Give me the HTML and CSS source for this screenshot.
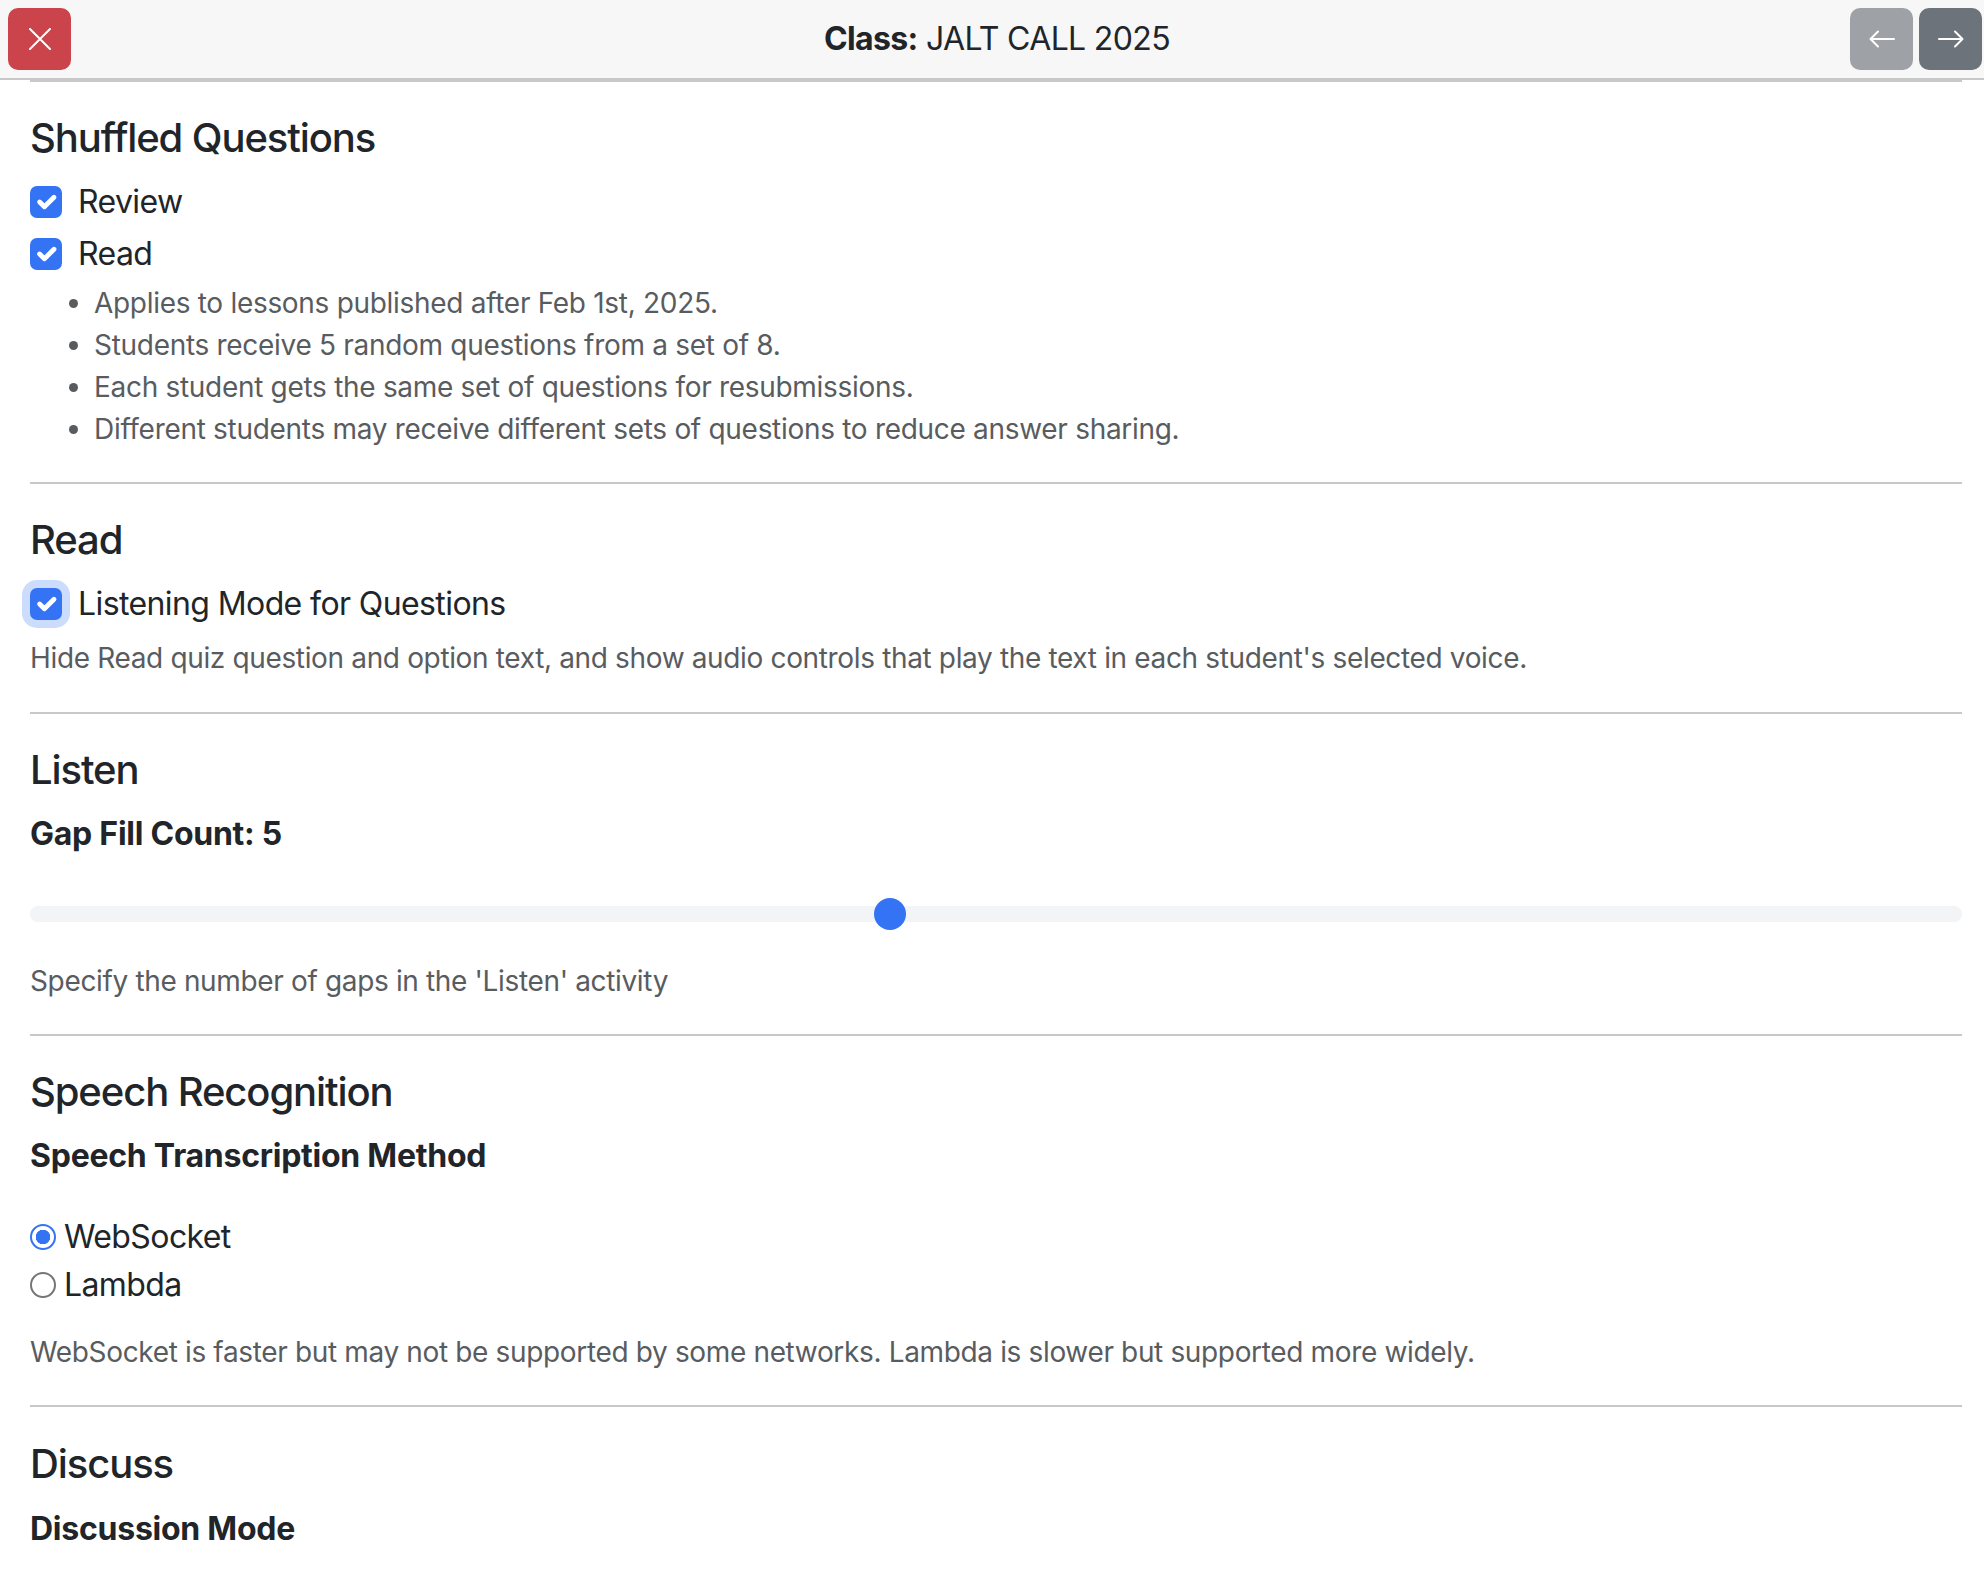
FILE: index.html
```html
<!DOCTYPE html>
<html lang="en">
<head>
<meta charset="utf-8">
<title>Class: JALT CALL 2025</title>
<link rel="stylesheet" href="styles.css">
</head>
<body>
<header class="topbar">
  <div class="topbar-left">
    <button class="btn btn-close-red" aria-label="Close">
      <svg width="22" height="22" viewBox="0 0 22 22"><path d="M1 1 L21 21 M21 1 L1 21" stroke="#fff" stroke-width="2" fill="none" stroke-linecap="round"/></svg>
    </button>
  </div>
  <div class="title"><b>Class:</b> JALT CALL 2025</div>
  <div class="topbar-right">
    <button class="btn btn-back" aria-label="Previous">
      <svg width="26" height="18" viewBox="0 0 26 18"><path d="M25 9 H2 M9 1.5 L1.5 9 L9 16.5" stroke="#fff" stroke-width="2" fill="none" stroke-linecap="round" stroke-linejoin="round"/></svg>
    </button>
    <button class="btn btn-next" aria-label="Next">
      <svg width="26" height="18" viewBox="0 0 26 18"><path d="M1 9 H24 M17 1.5 L24.5 9 L17 16.5" stroke="#fff" stroke-width="2" fill="none" stroke-linecap="round" stroke-linejoin="round"/></svg>
    </button>
  </div>
</header>

<main class="content">
  <section class="section">
    <h5 class="sec-title">Shuffled Questions</h5>
    <label class="form-check"><input type="checkbox" class="check" checked><span>Review</span></label>
    <label class="form-check"><input type="checkbox" class="check" checked><span>Read</span></label>
    <ul class="notes">
      <li>Applies to lessons published after Feb 1st, 2025.</li>
      <li>Students receive 5 random questions from a set of 8.</li>
      <li>Each student gets the same set of questions for resubmissions.</li>
      <li>Different students may receive different sets of questions to reduce answer sharing.</li>
    </ul>
  </section>

  <section class="section">
    <h5 class="sec-title">Read</h5>
    <label class="form-check"><input type="checkbox" class="check focused" checked><span>Listening Mode for Questions</span></label>
    <div class="form-text tight">Hide Read quiz question and option text, and show audio controls that play the text in each student's selected voice.</div>
  </section>

  <section class="section">
    <h5 class="sec-title">Listen</h5>
    <label class="field-label" for="gapfill">Gap Fill Count: 5</label>
    <input id="gapfill" class="range" type="range" min="1" max="10" value="5">
    <div class="form-text loose">Specify the number of gaps in the 'Listen' activity</div>
  </section>

  <section class="section">
    <h5 class="sec-title">Speech Recognition</h5>
    <div class="field-label group-label">Speech Transcription Method</div>
    <label class="radio-row"><input type="radio" name="method" class="radio" checked><span>WebSocket</span></label>
    <label class="radio-row"><input type="radio" name="method" class="radio"><span>Lambda</span></label>
    <div class="form-text loose">WebSocket is faster but may not be supported by some networks. Lambda is slower but supported more widely.</div>
  </section>

  <section class="section last">
    <h5 class="sec-title">Discuss</h5>
    <div class="field-label">Discussion Mode</div>
  </section>
</main>
</body>
</html>
```

FILE: styles.css
```css
html, body {
  margin: 0;
  padding: 0;
  background: #ffffff;
}
body {
  font-family: Inter, "Noto Sans", "Liberation Sans", sans-serif;
  font-size: 32px;
  line-height: 1.5;
  letter-spacing: -0.6px;
  color: #212529;
  overflow: hidden;
}

/* ---------- top bar ---------- */
.topbar {
  display: grid;
  grid-template-columns: 1fr auto 1fr;
  align-items: center;
  height: 78px;
  padding: 0 2px 0 8px;
  background: #f7f7f7;
  border-bottom: 2px solid #c8c8c8;
}
.topbar-left { display: flex; justify-content: flex-start; }
.topbar-right { display: flex; justify-content: flex-end; gap: 6px; }
.title {
  font-size: 32px;
  line-height: 48px;
  letter-spacing: -0.65px;
  color: #212529;
  white-space: nowrap;
  padding-left: 4px;
}
.title b { font-weight: 700; }
.btn {
  width: 63px;
  height: 62px;
  border: 0;
  border-radius: 10px;
  padding: 0;
  display: flex;
  align-items: center;
  justify-content: center;
  cursor: pointer;
}
.btn-close-red { background: #cb444b; }
.btn-back { background: #9ea1a6; }
.btn-next { background: #6c737b; }

/* ---------- content ---------- */
.content {
  margin: 0 22px 0 30px;
  border-top: 2px solid #c8c8c8;
}
.section {
  padding: 32px 0;
  border-bottom: 2px solid #c8c8c8;
}
.section.last {
  border-bottom: 0;
  padding-top: 33px;
}
.sec-title {
  margin: 0 0 16px;
  font-size: 40px;
  line-height: 48px;
  font-weight: 500;
  letter-spacing: -1.1px;
  color: #212529;
}
.section.last .sec-title { margin-bottom: 17px; }

/* checkbox rows */
.form-check {
  display: flex;
  align-items: flex-start;
  min-height: 48px;
  margin-bottom: 4px;
  line-height: 48px;
}
.form-check span { margin-left: 16px; }
.check {
  -webkit-appearance: none;
  appearance: none;
  flex: none;
  width: 32px;
  height: 32px;
  margin: 8px 0 0 0;
  border-radius: 7px;
  background-color: #3473f4;
  background-repeat: no-repeat;
  background-position: center;
  background-size: 100% 100%;
  background-image: url("data:image/svg+xml,%3csvg xmlns='http://www.w3.org/2000/svg' viewBox='0 0 20 20'%3e%3cpath fill='none' stroke='%23fff' stroke-linecap='round' stroke-linejoin='round' stroke-width='3' d='m6 10 3 3 6-6'/%3e%3c/svg%3e");
}
.check.focused { box-shadow: 0 0 0 8px #cbdcfd; }

.notes {
  margin: 0;
  padding-left: 64px;
  font-size: 28px;
  line-height: 42px;
  letter-spacing: -0.3px;
  color: #595c5f;
}

.form-text {
  font-size: 28px;
  line-height: 42px;
  letter-spacing: -0.35px;
  color: #595c5f;
}
.form-text.tight { margin-top: 9px; margin-bottom: 1px; }
.form-text.loose { margin-top: 22px; }

/* labels */
.field-label {
  display: block;
  font-weight: 700;
  font-size: 32px;
  line-height: 48px;
  letter-spacing: -0.25px;
  margin-bottom: 32px;
}
.field-label.group-label { margin-top: 1px; margin-bottom: 33px; }

/* range */
.range {
  -webkit-appearance: none;
  appearance: none;
  display: block;
  width: 100%;
  height: 48px;
  margin: 0;
  padding: 0;
  background: transparent;
}
.range::-webkit-slider-runnable-track {
  height: 16px;
  border-radius: 8px;
  background: #f3f4f6;
}
.range::-webkit-slider-thumb {
  -webkit-appearance: none;
  appearance: none;
  width: 32px;
  height: 32px;
  margin-top: -8px;
  border-radius: 50%;
  border: 0;
  background: #3473f4;
}

/* radios */
.radio-row {
  display: flex;
  align-items: center;
  height: 48px;
  line-height: 48px;
}
.radio-row span { margin-left: 8px; }
.radio {
  -webkit-appearance: none;
  appearance: none;
  flex: none;
  width: 26px;
  height: 26px;
  margin: 0;
  border-radius: 50%;
  border: 2px solid #767676;
  background: #fff;
}
.radio:checked {
  border-color: #3473f4;
  background: radial-gradient(circle, #3473f4 0 7px, #ffffff 7.5px);
}
```
